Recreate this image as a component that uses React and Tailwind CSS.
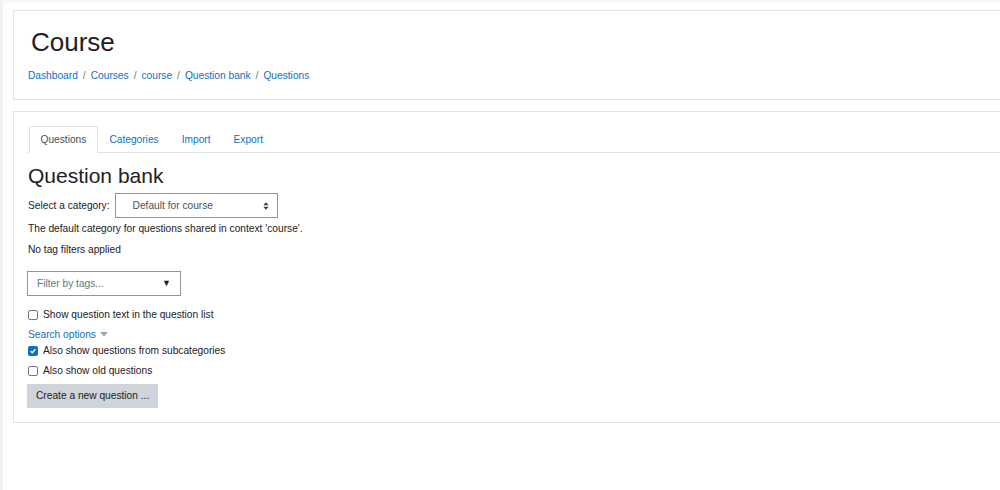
import React from "react";

const font = { fontFamily: '"Liberation Sans", Arial, sans-serif' };

const Crumb = ({ children }) => (
    <a href="#" className="text-[#0f6fc5] hover:underline">{children}</a>
);

const Sep = () => <span className="mx-[5px] text-[#6a737b]">/</span>;

const Check = ({ checked, label }) => (
    <label className="flex items-center gap-[5px] text-[10.2px] leading-[13px] text-[#1d2125]">
        {checked ? (
            <span className="w-[10px] h-[10px] rounded-[2px] bg-[#0f6fc5] flex items-center justify-center">
                <svg viewBox="0 0 10 10" className="w-[8px] h-[8px]">
                    <path d="M2 5.2 L4.1 7.2 L8 2.8" stroke="white" strokeWidth="1.6" fill="none" />
                </svg>
            </span>
        ) : (
            <span className="w-[10px] h-[10px] rounded-[2px] border border-[#767676] bg-white" />
        )}
        <span>{label}</span>
    </label>
);

const App = () => {
    const tabs = ["Questions", "Categories", "Import", "Export"];

    return (
        <div className="w-[1000px] h-[490px] overflow-hidden bg-white flex" style={font}>
            {/* left drawer edge */}
            <div className="w-[3px] shrink-0 bg-[#f2f2f2]" />
            <div className="flex-1 flex flex-col">
                <div className="h-[3px] bg-[#f7f7f7]" />
                <div className="pl-[10px] pt-[7px] flex flex-col">
                    {/* page header */}
                    <div className="h-[90px] border border-[#e4e4e4] mr-[-4px] px-[16px] pt-[15px]">
                        <h1 className="text-[26px] leading-[32px] text-[#1d2125] ml-[1px]">Course</h1>
                        <div className="mt-[10px] text-[10.2px] text-[#0f6fc5] flex items-center ml-[-2px]">
                            <Crumb>Dashboard</Crumb>
                            <Sep />
                            <Crumb>Courses</Crumb>
                            <Sep />
                            <Crumb>course</Crumb>
                            <Sep />
                            <Crumb>Question bank</Crumb>
                            <Sep />
                            <Crumb>Questions</Crumb>
                        </div>
                    </div>

                    {/* main region */}
                    <div className="mt-[11px] h-[312px] border border-[#e4e4e4] mr-[-4px] pl-[14px] pt-[14px]">
                        <div className="flex border-b border-[#dee2e6] pl-[1px]">
                            {tabs.map((t, i) => (
                                <div
                                    key={t}
                                    className={`h-[27px] px-[10.5px] flex items-center text-[10.2px] mb-[-1px] ${
                                        i === 0
                                            ? "border border-[#dee2e6] border-b-white bg-white text-[#495057] rounded-t-[2px]"
                                            : "text-[#0f6fc5] border border-transparent"
                                    }`}
                                >
                                    {t}
                                </div>
                            ))}
                        </div>

                        <h2 className="text-[21px] leading-[24px] text-[#1d2125] mt-[11px]">Question bank</h2>

                        <div className="flex items-center mt-[5px] text-[10.2px] text-[#1d2125]">
                            <span>Select a category:</span>
                            <div className="ml-[5px] w-[163px] h-[25px] border border-[#8f959e] bg-white flex items-center justify-between pl-[17px] pr-[8px] text-[#495057]">
                                <span>Default for course</span>
                                <svg viewBox="0 0 8 10" className="w-[6px] h-[8px]">
                                    <path d="M4 0 L7.5 4 L0.5 4 Z M0.5 6 L7.5 6 L4 10 Z" fill="#343a40" />
                                </svg>
                            </div>
                        </div>

                        <p className="text-[10.2px] text-[#1d2125] mt-[4px] leading-[14px]">
                            The default category for questions shared in context 'course'.
                        </p>
                        <p className="text-[10.2px] text-[#1d2125] mt-[7px] leading-[14px]">No tag filters applied</p>

                        <div className="mt-[14px] ml-[-1px] w-[154px] h-[25px] border border-[#8f959e] flex items-center justify-between pl-[9px] pr-[9px] text-[10.2px] text-[#6a737b]">
                            <span>Filter by tags...</span>
                            <span className="text-[#1d2125] text-[9px]">▼</span>
                        </div>

                        <div className="mt-[12px]">
                            <Check label="Show question text in the question list" />
                        </div>

                        <div className="mt-[7px] flex items-center text-[10.2px] text-[#0f6fc5] leading-[13px]">
                            <span>Search options</span>
                            <svg viewBox="0 0 8 5" className="w-[8px] h-[5px] ml-[4px]">
                                <path d="M0 0 L8 0 L4 4.5 Z" fill="#a0a4a8" />
                            </svg>
                        </div>
                        <div className="mt-[3px]">
                            <Check checked label="Also show questions from subcategories" />
                        </div>
                        <div className="mt-[7px]">
                            <Check label="Also show old questions" />
                        </div>

                        <button className="mt-[7px] ml-[-1px] h-[24px] px-[9px] bg-[#ced4da] text-[10.2px] text-[#1d2125]">
                            Create a new question ...
                        </button>
                    </div>
                </div>
            </div>
        </div>
    );
};

export default App;
